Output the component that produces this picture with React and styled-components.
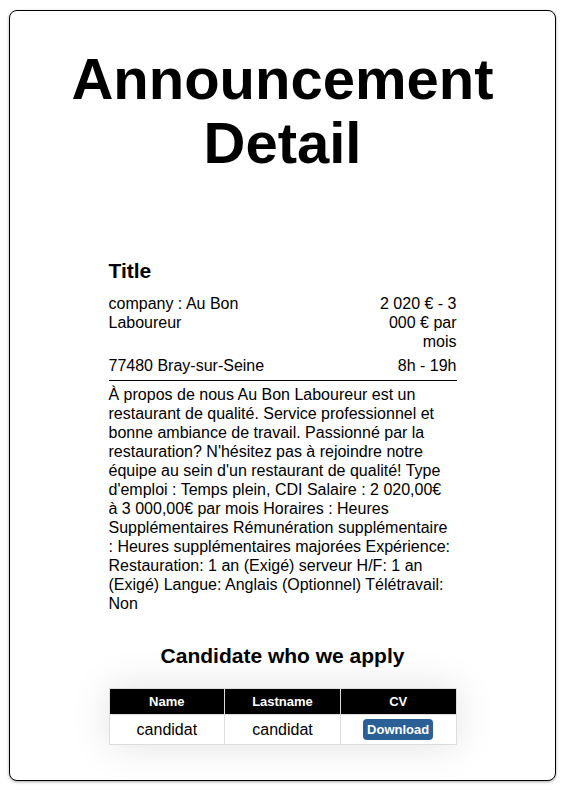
import React from "react";
import styled, { createGlobalStyle } from "styled-components";

const Global = createGlobalStyle`
  html, body { margin: 0; padding: 0; background: #fff; }
  body {
    font-family: "Liberation Sans", Arial, sans-serif;
    color: #000;
    padding: 10px 5px 10px 9px;
  }
`;

const Card = styled.div`
  width: 545px;
  border: 1px solid #000;
  border-radius: 8px;
  box-shadow: 0 1px 3px rgba(0, 0, 0, 0.35);
  padding: 36px 0 35px;
  background: #fff;
`;

const PageTitle = styled.h1`
  margin: 0;
  font-size: 58px;
  line-height: 64px;
  font-weight: 700;
  text-align: center;
`;

const Section = styled.section`
  width: 348px;
  margin: 84px auto 0;
  font-size: 16px;
  line-height: 19px;
`;

const SectionTitle = styled.h3`
  margin: 0 0 ${(p) => (p.$center ? "20px" : "11px")};
  font-size: 21px;
  line-height: 24px;
  font-weight: 700;
  text-align: ${(p) => (p.$center ? "center" : "left")};
`;

const InfoRow = styled.div`
  display: flex;
  justify-content: space-between;
  align-items: flex-start;
  margin-bottom: 5px;
`;

const InfoCell = styled.div`
  width: ${(p) => p.$w};
  text-align: ${(p) => (p.$right ? "right" : "left")};
`;

const Divider = styled.hr`
  margin: 0 0 4px;
  border: 0;
  border-top: 1px solid #000;
`;

const Description = styled.p`
  margin: 0;
  padding-right: 3px;
`;

const Candidates = styled.div`
  width: 348px;
  margin: 31px auto 0;
`;

const Table = styled.table`
  width: 100%;
  border-collapse: collapse;
  box-shadow: 0 0 40px rgba(0, 0, 0, 0.12);
  table-layout: fixed;
`;

const Th = styled.th`
  background: #000;
  color: #fff;
  font-size: 13px;
  font-weight: 700;
  height: 25px;
  padding: 0;
  border: 1px solid #ddd;
`;

const Td = styled.td`
  font-size: 16px;
  height: 29px;
  padding: 0;
  text-align: center;
  border: 1px solid #ddd;
`;

const DownloadButton = styled.button`
  font-family: "Liberation Sans", Arial, sans-serif;
  font-size: 13px;
  font-weight: 700;
  color: #fff;
  background: #2b6096;
  border: 0;
  border-radius: 4px;
  width: 70px;
  height: 21px;
  padding: 0;
  line-height: 21px;
  vertical-align: middle;
`;

export default function App() {
  return (
    <>
      <Global />
      <Card>
        <PageTitle>
          Announcement
          <br />
          Detail
        </PageTitle>
        <Section>
          <SectionTitle>Title</SectionTitle>
          <InfoRow>
            <InfoCell $w="50%">company : Au Bon Laboureur</InfoCell>
            <InfoCell $w="30%" $right>
              2 020 € - 3 000 € par mois
            </InfoCell>
          </InfoRow>
          <InfoRow>
            <InfoCell $w="50%">77480 Bray-sur-Seine</InfoCell>
            <InfoCell $w="30%" $right>
              8h - 19h
            </InfoCell>
          </InfoRow>
          <Divider />
          <Description>
            À propos de nous Au Bon Laboureur est un restaurant de qualité. Service professionnel et bonne ambiance de travail. Passionné par la restauration? N'hésitez pas à rejoindre notre équipe au sein d'un restaurant de qualité! Type d'emploi : Temps plein, CDI Salaire : 2 020,00€ à 3 000,00€ par mois Horaires : Heures Supplémentaires Rémunération supplémentaire : Heures supplémentaires majorées Expérience: Restauration: 1 an (Exigé) serveur H/F: 1 an (Exigé) Langue: Anglais (Optionnel) Télétravail: Non
          </Description>
        </Section>
        <Candidates>
          <SectionTitle $center>Candidate who we apply</SectionTitle>
          <Table>
            <thead>
              <tr>
                <Th>Name</Th>
                <Th>Lastname</Th>
                <Th>CV</Th>
              </tr>
            </thead>
            <tbody>
              <tr>
                <Td>candidat</Td>
                <Td>candidat</Td>
                <Td>
                  <DownloadButton>Download</DownloadButton>
                </Td>
              </tr>
            </tbody>
          </Table>
        </Candidates>
      </Card>
    </>
  );
}
